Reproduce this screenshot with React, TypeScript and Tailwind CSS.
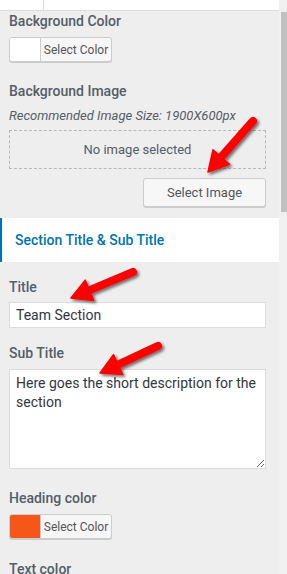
import React from 'react';

type Pt = [number, number];

const Arrow: React.FC<{ tail: Pt; tip: Pt }> = ({ tail, tip }) => {
  const dx = tip[0] - tail[0];
  const dy = tip[1] - tail[1];
  const len = Math.hypot(dx, dy);
  const ux = dx / len;
  const uy = dy / len;
  const head = 20;
  const half = 11;
  const bx = tip[0] - ux * head;
  const by = tip[1] - uy * head;
  const pts = [
    `${tip[0]},${tip[1]}`,
    `${bx - uy * half},${by + ux * half}`,
    `${bx + uy * half},${by - ux * half}`,
  ].join(' ');
  return (
    <g filter="url(#arrowShadow)">
      <line x1={tail[0]} y1={tail[1]} x2={bx + ux * 3} y2={by + uy * 3} stroke="#ff0000" strokeWidth={8} strokeLinecap="round" />
      <polygon points={pts} fill="#ff0000" stroke="#ff0000" strokeWidth={1.5} strokeLinejoin="round" />
    </g>
  );
};

const ColorButton: React.FC<{ swatch: string }> = ({ swatch }) => (
  <div className="flex h-[25px] w-[103px] rounded-[3px] border border-[#ccc] bg-[#f7f7f7] shadow-[0_1px_0_#ccc] overflow-hidden">
    <div className="w-[31px] h-full border-r border-[#ccc]" style={{ backgroundColor: swatch }} />
    <span className="flex-1 flex items-center justify-center text-[12px] text-[#555]">Select Color</span>
  </div>
);

const Label: React.FC<{ children: React.ReactNode }> = ({ children }) => (
  <div className="text-[14px] leading-[20px] font-medium text-[#555d66]">{children}</div>
);

export default function App() {
  return (
    <div className="relative w-[287px] h-[574px] overflow-hidden flex font-['Roboto',sans-serif]">
      <div className="w-[279px] bg-[#eeeeee]">
        {/* top strip */}
        <div className="h-[11px] bg-white border-b border-[#ddd] flex">
          <div className="w-[44px] border-r border-[#ddd]" />
        </div>

        <div className="px-[9px]">
          <Label>Background Color</Label>
          <div className="mt-[6px]">
            <ColorButton swatch="#ffffff" />
          </div>

          <div className="mt-[19px]">
            <Label>Background Image</Label>
          </div>
          <div className="mt-[6px] text-[13px] leading-[18px] italic text-[#555d66]">
            Recommended Image Size: 1900X600px
          </div>
          <div className="mt-[5px] w-[257px] h-[39px] border border-dashed border-[#b4b9be] flex items-center justify-center text-[13px] text-[#555d66]">
            No image selected
          </div>
          <div className="mt-[9px] flex justify-end w-[257px]">
            <div className="w-[123px] h-[29px] rounded-[3px] border border-[#ccc] bg-[#f7f7f7] shadow-[0_1px_0_#ccc] flex items-center justify-center text-[13px] text-[#555]">
              Select Image
            </div>
          </div>
        </div>

        {/* section header */}
        <div className="mt-[11px] h-[44px] bg-white border-l-2 border-[#0073aa] flex items-center pl-[13px] text-[14px] font-medium text-[#0073aa]">
          Section Title &amp; Sub Title
        </div>

        <div className="px-[9px]">
          <div className="pt-[15px]">
            <Label>Title</Label>
          </div>
          <input
            readOnly
            value="Team Section"
            className="mt-[5px] block w-[257px] h-[26px] bg-white border border-[#ddd] px-[6px] text-[14px] text-[#32373c] outline-none"
          />

          <div className="mt-[15px]">
            <Label>Sub Title</Label>
          </div>
          <textarea
            readOnly
            value="Here goes the short description for the section"
            className="mt-[6px] block w-[257px] h-[100px] bg-white border border-[#ddd] px-[6px] py-[4px] text-[14px] leading-[19px] text-[#32373c] outline-none resize"
          />

          <div className="mt-[19px]">
            <Label>Heading color</Label>
          </div>
          <div className="mt-[6px]">
            <ColorButton swatch="#f7561a" />
          </div>

          <div className="mt-[20px]">
            <Label>Text color</Label>
          </div>
        </div>
      </div>

      {/* scrollbar */}
      <div className="w-[8px] bg-[#f1f1f1]">
        <div className="mt-[12px] ml-[2px] w-[6px] h-[200px] bg-[#c1c1c1]" />
      </div>

      <svg className="absolute inset-0 pointer-events-none" width={287} height={574}>
        <defs>
          <filter id="arrowShadow" x="-30%" y="-30%" width="160%" height="160%">
            <feDropShadow dx="2" dy="2" stdDeviation="1.5" floodColor="#000" floodOpacity="0.55" />
          </filter>
        </defs>
        <Arrow tail={[253, 121]} tip={[208, 172]} />
        <Arrow tail={[133, 272]} tip={[71, 298]} />
        <Arrow tail={[158, 346]} tip={[100, 373]} />
      </svg>
    </div>
  );
}
